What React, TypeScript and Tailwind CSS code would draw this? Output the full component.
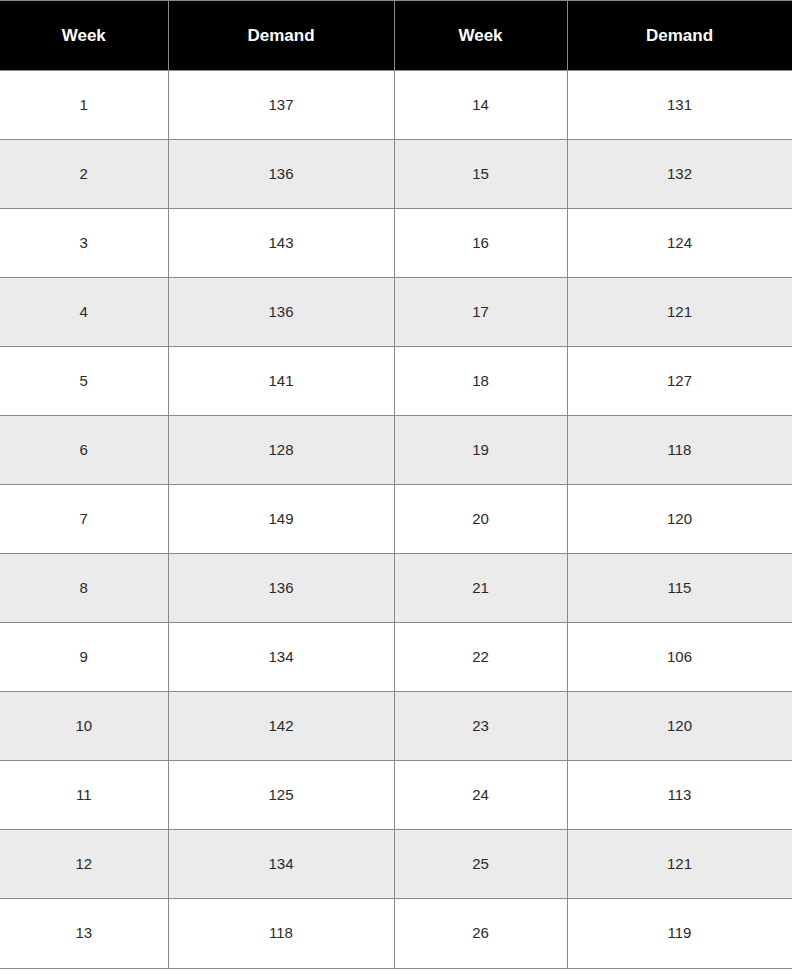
import React from "react";

const rows: [number, number, number, number][] = [
  [1, 137, 14, 131],
  [2, 136, 15, 132],
  [3, 143, 16, 124],
  [4, 136, 17, 121],
  [5, 141, 18, 127],
  [6, 128, 19, 118],
  [7, 149, 20, 120],
  [8, 136, 21, 115],
  [9, 134, 22, 106],
  [10, 142, 23, 120],
  [11, 125, 24, 113],
  [12, 134, 25, 121],
  [13, 118, 26, 119],
];

export default function App() {
  return (
    <div className="w-[792px] bg-white font-['Liberation_Sans',Arial,sans-serif]">
      <table className="w-[792px] border-collapse table-fixed text-center">
        <colgroup>
          <col className="w-[168px]" />
          <col className="w-[226px]" />
          <col className="w-[173px]" />
          <col className="w-[225px]" />
        </colgroup>
        <thead>
          <tr className="h-[70px] bg-black text-white text-[17px] font-semibold">
            <th className="border border-[#8a8a8a] border-l-0">Week</th>
            <th className="border border-[#8a8a8a]">Demand</th>
            <th className="border border-[#8a8a8a]">Week</th>
            <th className="border border-[#8a8a8a]">Demand</th>
          </tr>
        </thead>
        <tbody>
          {rows.map((r, i) => (
            <tr
              key={i}
              className={`${i === 12 ? "h-[70px]" : "h-[69px]"} text-[15px] text-[#2a2a2a] ${i % 2 === 1 ? "bg-[#ebebeb]" : "bg-white"}`}
            >
              {r.map((v, j) => (
                <td key={j} className={`border border-[#8a8a8a] ${j === 0 ? "border-l-0" : ""}`}>
                  {v}
                </td>
              ))}
            </tr>
          ))}
        </tbody>
      </table>
    </div>
  );
}
